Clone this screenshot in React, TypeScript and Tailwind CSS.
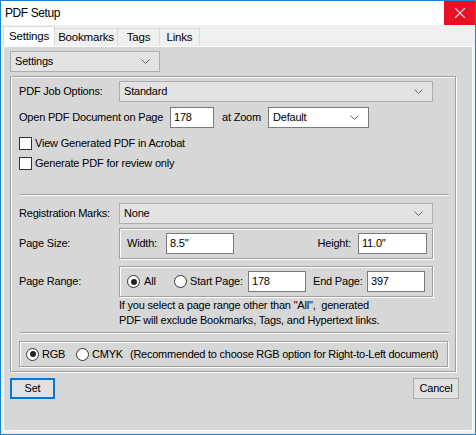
import React from 'react';

const font = "font-['Liberation_Sans',Arial,sans-serif]";

const Chevron = () => (
  <svg width="9" height="5" viewBox="0 0 9 5" className="shrink-0">
    <path d="M0.5 0.5 L4.5 4.5 L8.5 0.5" fill="none" stroke="#666" strokeWidth="1" />
  </svg>
);

function Combo({ text, w, white }: { text: string; w: string; white?: boolean }) {
  return (
    <div
      className={`${w} h-[21px] flex items-center justify-between pl-[4px] pr-[9px] border ${
        white ? 'bg-white border-[#7a7a7a]' : 'bg-[#e3e3e3] border-[#adadad]'
      }`}
    >
      <span>{text}</span>
      <Chevron />
    </div>
  );
}

function Field({ value, w }: { value: string; w: string }) {
  return (
    <div className={`${w} h-[21px] flex items-center pl-[3px] bg-white border border-[#7a7a7a]`}>
      {value}
    </div>
  );
}

function Radio({ checked }: { checked?: boolean }) {
  return (
    <span className="w-[13px] h-[13px] rounded-full border border-[#333] bg-white flex items-center justify-center shrink-0">
      {checked && <span className="w-[6px] h-[6px] rounded-full bg-[#222]" />}
    </span>
  );
}

function Check({ label }: { label: string }) {
  return (
    <div className="h-[20px] flex items-center gap-[3px]">
      <span className="w-[13px] h-[13px] border border-[#333] bg-white shrink-0" />
      <span>{label}</span>
    </div>
  );
}

const etched = 'border border-[#a0a0a0] shadow-[inset_1px_1px_0_#fff,1px_1px_0_#fff]';
const Sep = ({ mt }: { mt: string }) => (
  <div className={`${mt} w-[430px] h-[2px] border-t border-[#a0a0a0] border-b border-b-white`} />
);

export default function App() {
  return (
    <div className={`w-[476px] h-[435px] border border-[#1883d7] bg-[#f0f0f0] flex flex-col text-[11px] tracking-[-0.2px] text-black ${font}`}>
      {/* ── Title bar ─────────────────────────────────────────── */}
      <div className="h-[24px] bg-white flex items-center justify-between shrink-0">
        <span className="pl-[4px] text-[12px] tracking-[-0.4px]">PDF Setup</span>
        <div className="w-[31px] h-[24px] bg-[#e81123] flex items-center justify-center">
          <svg width="10" height="10" viewBox="0 0 10 10">
            <path d="M0 0 L10 10 M10 0 L0 10" stroke="#fff" strokeWidth="1.1" />
          </svg>
        </div>
      </div>

      {/* ── Tabs ──────────────────────────────────────────────── */}
      <div className="h-[21px] flex items-end pl-[2px] shrink-0 text-[11.5px]">
        <div className="h-[20px] w-[52px] bg-white border-l border-t border-r border-[#d9d9d9] flex items-center justify-center">
          Settings
        </div>
        <div className="h-[18px] w-[63px] bg-[#f0f0f0] border-t border-r border-[#d9d9d9] flex items-center justify-center">
          Bookmarks
        </div>
        <div className="h-[18px] w-[42px] bg-[#f0f0f0] border-t border-r border-[#d9d9d9] flex items-center justify-center">
          Tags
        </div>
        <div className="h-[18px] w-[40px] bg-[#f0f0f0] border-t border-r border-[#d9d9d9] flex items-center justify-center">
          Links
        </div>
      </div>

      {/* ── Panel ─────────────────────────────────────────────── */}
      <div className="mx-[2px] h-[385px] border border-white bg-[#d7d7d7] flex flex-col">
        <div className="ml-[6px] mt-[4px]">
          <Combo text="Settings" w="w-[150px]" />
        </div>

        <div className={`ml-[6px] mt-[4px] w-[446px] h-[296px] ${etched} flex flex-col pl-[8px]`}>
          <div className="mt-[4px] h-[21px] flex items-center">
            <span className="w-[100px]">PDF Job Options:</span>
            <Combo text="Standard" w="w-[314px]" />
          </div>

          <div className="mt-[5px] h-[21px] flex items-center">
            <span className="w-[151px]">Open PDF Document on Page</span>
            <Field value="178" w="w-[44px]" />
            <span className="ml-[8px] w-[46px]">at Zoom</span>
            <Combo text="Default" w="w-[101px]" white />
          </div>

          <div className="mt-[5px]">
            <Check label="View Generated PDF in Acrobat" />
            <Check label="Generate PDF for review only" />
          </div>

          <Sep mt="mt-[21px]" />

          <div className="mt-[7px] h-[21px] flex items-center">
            <span className="w-[100px]">Registration Marks:</span>
            <Combo text="None" w="w-[314px]" />
          </div>

          <div className="mt-[4px] h-[31px] flex items-center">
            <span className="w-[100px]">Page Size:</span>
            <div className={`w-[314px] h-[31px] ${etched} flex items-center pl-[7px] pr-[5px]`}>
              <span className="w-[39px]">Width:</span>
              <Field value={'8.5"'} w="w-[68px]" />
              <span className="flex-1" />
              <span className="mr-[7px]">Height:</span>
              <Field value={'11.0"'} w="w-[69px]" />
            </div>
          </div>

          <div className="mt-[7px] h-[31px] flex items-center">
            <span className="w-[100px]">Page Range:</span>
            <div className={`w-[314px] h-[31px] ${etched} flex items-center pl-[7px]`}>
              <Radio checked />
              <span className="ml-[4px] w-[30px]">All</span>
              <Radio />
              <span className="ml-[3px] w-[58px]">Start Page:</span>
              <Field value="178" w="w-[58px]" />
              <span className="ml-[7px] w-[54px]">End Page:</span>
              <Field value="397" w="w-[58px]" />
            </div>
          </div>

          <div className="pl-[100px] leading-[15px] mt-[1px] whitespace-pre">
            <div>{'If you select a page range other than "All",  generated'}</div>
            <div>PDF will exclude Bookmarks, Tags, and Hypertext links.</div>
          </div>

          <Sep mt="mt-[4px]" />

          <div className={`mt-[7px] w-[429px] h-[26px] ${etched} flex items-center pl-[6px]`}>
            <Radio checked />
            <span className="ml-[3px] w-[34px]">RGB</span>
            <Radio />
            <span className="ml-[3px]">CMYK</span>
            <span className="ml-[7px] tracking-[-0.25px]">(Recommended to choose RGB option for Right-to-Left document)</span>
          </div>
        </div>

        <div className="mt-[6px] flex justify-between pl-[6px] pr-[13px]">
          <button
            type="button"
            className="w-[45px] h-[21px] bg-[#e1e1e1] border-2 border-[#0078d7] flex items-center justify-center"
          >
            Set
          </button>
          <button
            type="button"
            className="w-[46px] h-[21px] bg-[#e1e1e1] border border-[#adadad] flex items-center justify-center"
          >
            Cancel
          </button>
        </div>
      </div>
    </div>
  );
}
